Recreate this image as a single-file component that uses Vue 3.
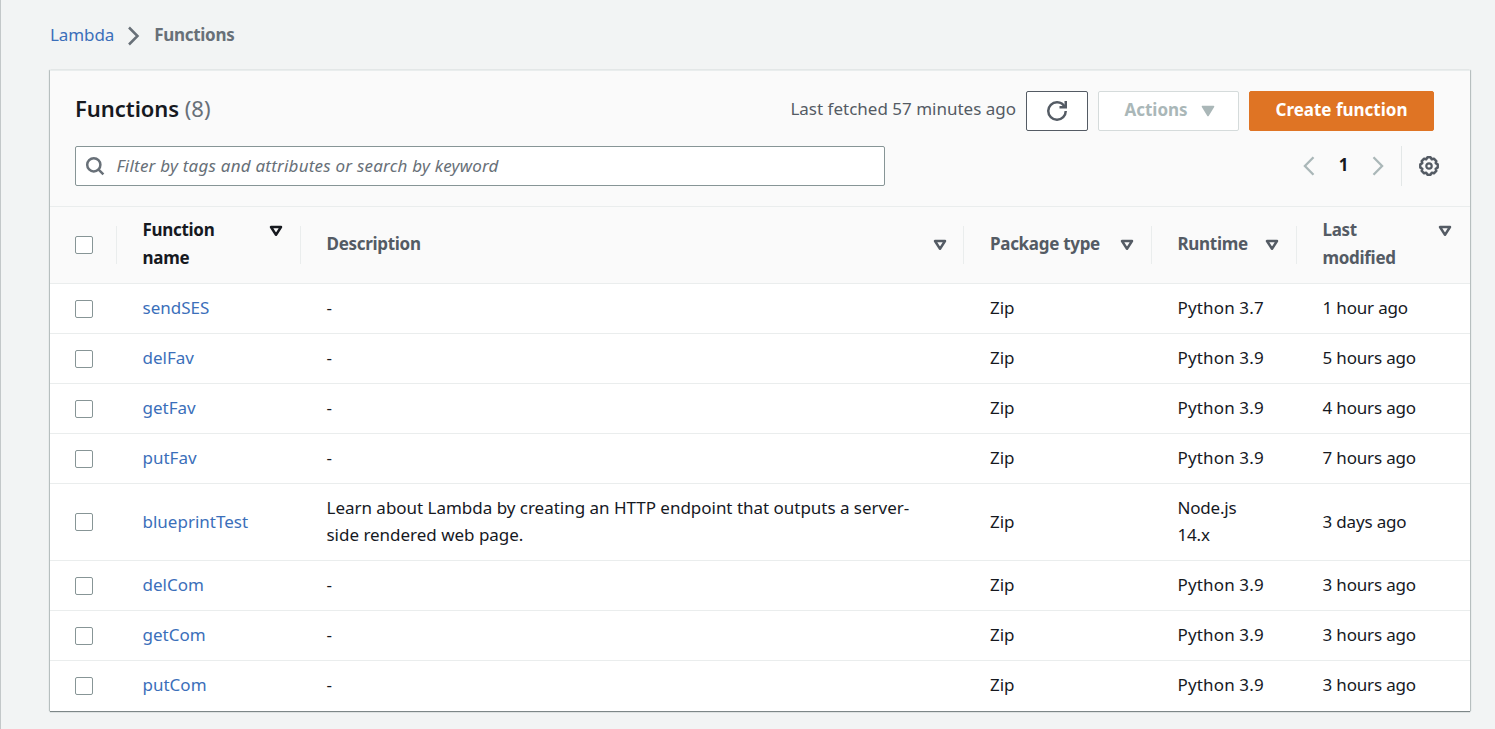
<script setup>
const rows = [
  { name: 'sendSES', desc: '-', runtime: 'Python 3.7', modified: '1 hour ago' },
  { name: 'delFav', desc: '-', runtime: 'Python 3.9', modified: '5 hours ago' },
  { name: 'getFav', desc: '-', runtime: 'Python 3.9', modified: '4 hours ago' },
  { name: 'putFav', desc: '-', runtime: 'Python 3.9', modified: '7 hours ago' },
  {
    name: 'blueprintTest',
    desc: 'Learn about Lambda by creating an HTTP endpoint that outputs a server-side rendered web page.',
    runtime: 'Node.js 14.x',
    modified: '3 days ago',
    tall: true
  },
  { name: 'delCom', desc: '-', runtime: 'Python 3.9', modified: '3 hours ago' },
  { name: 'getCom', desc: '-', runtime: 'Python 3.9', modified: '3 hours ago' },
  { name: 'putCom', desc: '-', runtime: 'Python 3.9', modified: '3 hours ago' }
]
const columns = [
  { label: 'Function name', cls: 'sorted two' },
  { label: 'Description', cls: 'about' },
  { label: 'Package type', cls: 'pkg' },
  { label: 'Runtime', cls: 'run' },
  { label: 'Last modified', cls: 'two last' }
]
</script>

<template>
  <div class="page">
    <nav class="crumbs">
      <a class="root">Lambda</a>
      <svg width="14" height="20" viewBox="0 0 14 20"><path d="M2 1.5 10.5 10 2 18.5" fill="none" stroke="#687078" stroke-width="2.5" /></svg>
      <span class="here">Functions</span>
    </nav>

    <section class="card">
      <header class="head">
        <div class="row-top">
          <h2>Functions <span>(8)</span></h2>
          <div class="actions">
            <span class="fetched">Last fetched 57 minutes ago</span>
            <button class="btn refresh">
              <svg width="20" height="20" viewBox="0 0 16 16" fill="none" stroke="#545b64" stroke-width="2">
                <path d="M10 5h5V0" />
                <path d="M15 8a6.96 6.96 0 0 1-7 7 6.96 6.96 0 0 1-7-7 6.96 6.96 0 0 1 7-7 6.87 6.87 0 0 1 6.3 4" />
              </svg>
            </button>
            <button class="btn menu">
              <span>Actions</span>
              <svg width="14" height="12" viewBox="0 0 14 12"><path d="M1.5 1.5h11L7 10.5z" fill="#aab7b8" stroke="#aab7b8" stroke-width="1.6" stroke-linejoin="round" /></svg>
            </button>
            <button class="btn primary"><span>Create function</span></button>
          </div>
        </div>
        <div class="row-filter">
          <div class="search">
            <svg width="20" height="20" viewBox="0 0 20 20" fill="none" stroke="#687078" stroke-width="2.5"><circle cx="8.8" cy="8.8" r="6.6" /><path d="m13.4 13.4 5 5" /></svg>
            <span>Filter by tags and attributes or search by keyword</span>
          </div>
          <div class="pager">
            <svg width="12" height="20" viewBox="0 0 12 20"><path d="M10.5 1.2 1.9 10l8.6 8.8" fill="none" stroke="#aab7b8" stroke-width="2.3" /></svg>
            <b>1</b>
            <svg width="12" height="20" viewBox="0 0 12 20"><path d="M1.5 1.2 10.1 10l-8.6 8.8" fill="none" stroke="#aab7b8" stroke-width="2.3" /></svg>
            <i class="rule"></i>
            <svg width="22" height="22" viewBox="0 0 22 22" fill="none" stroke="#545b64" stroke-width="2.5" stroke-linejoin="round">
              <path d="M19.7 9.4v3.2l-2 1.2.6 2.1-2.4 2.4-2.1-.6-1.2 2H9.4l-1.2-2-2.1.6-2.4-2.4.6-2.1-2-1.2V9.4l2-1.2-.6-2.1 2.4-2.4 2.1.6 1.2-2h3.2l1.2 2 2.1-.6 2.4 2.4-.6 2.1z" />
              <circle cx="11" cy="11" r="2.7" stroke-width="2.2" />
            </svg>
          </div>
        </div>
      </header>

      <div class="grid thead">
        <div class="cell check"><i class="box"></i></div>
        <div v-for="c in columns" :key="c.label" class="cell" :class="c.cls">
          <span class="label">{{ c.label }}</span>
          <svg class="sort" width="14" height="12" viewBox="0 0 14 12"><path d="M2 2h10L7 9.8z" fill="none" stroke="currentColor" stroke-width="2.5" stroke-linejoin="round" /></svg>
        </div>
      </div>

      <div v-for="r in rows" :key="r.name" class="grid tr" :class="{ tall: r.tall }">
        <div class="cell check"><i class="box"></i></div>
        <div class="cell"><a>{{ r.name }}</a></div>
        <div class="cell desc">{{ r.desc }}</div>
        <div class="cell pkg">Zip</div>
        <div class="cell runtime">{{ r.runtime }}</div>
        <div class="cell modified">{{ r.modified }}</div>
      </div>
    </section>
  </div>
</template>

<style>
body { margin: 0; background: #f2f3f3; }
</style>

<style scoped>
* { box-sizing: border-box; }
.page {
  height: 729px;
  padding: 20px 24px 0 49px;
  border-left: 1px solid #c3c8c9;
  background: #f2f4f4;
  overflow: hidden;
  font: 17px/27px "Noto Sans", "Open Sans", sans-serif;
  color: #16191f;
}
svg { display: block; flex: none; }
a { color: #3b6fba; }
.crumbs { display: flex; align-items: center; height: 30px; }
.root { letter-spacing: -0.1px; margin-top: -2px; }
.crumbs svg { margin: 2px 13px 0 13px; }
.here { font-weight: 700; color: #687078; letter-spacing: -0.3px; margin-top: -2px; }
.card {
  margin-top: 20px;
  width: 1420px;
  background: #fff;
  border-top: 1px solid #e9eded;
  box-shadow: 0 1px 1px #7d8788, 1px 0 1px #c3caca, -1px 0 1px #c3caca;
}
.head { height: 136px; padding: 20px 36px 0 25px; background: #fafafa; border-bottom: 1px solid #eaeded; }
.row-top { display: flex; justify-content: space-between; height: 40px; }
h2 { margin: 0; font-size: 22px; line-height: 35px; font-weight: 600; letter-spacing: -0.05px; }
h2 span { font-weight: 400; color: #687078; }
.actions { display: flex; align-items: center; gap: 10px; }
.fetched { color: #545b64; margin-top: -6px; white-space: nowrap; }
.btn {
  display: flex; align-items: center; justify-content: center; height: 40px; padding: 0;
  border-radius: 2px; border: 1px solid #545b64; background: #fff; font: inherit; font-weight: 700; white-space: nowrap;
}
.btn span { margin-top: -4px; }
.refresh { width: 62px; }
.menu { width: 141px; border-color: #d5dbdb; color: #aab7b8; gap: 13px; padding-left: 2px; }
.primary { width: 185px; background: #df7424; border-color: #df7424; color: #fff; }
.row-filter { display: flex; justify-content: space-between; margin-top: 15px; height: 40px; }
.search {
  display: flex; align-items: center; gap: 11px; width: 810px; padding-left: 10px;
  border: 1px solid #879596; border-radius: 2px; background: #fff; font-style: italic; color: #687078;
}
.search span { letter-spacing: 0.22px; margin: -2px 0 0 0.5px; }
.search svg { margin-left: -1px; }
.pager { display: flex; align-items: center; margin-right: -6px; }
.pager b { width: 57px; text-align: center; margin-top: -3px; }
.rule { width: 1px; height: 40px; background: #e3e7e7; margin: 0 16px 0 17px; }
.grid { display: grid; grid-template-columns: 67px 184px 663px 188px 145px 173px; }
.thead { height: 77px; background: #fafafa; border-bottom: 1px solid #eaeded; align-items: center; font-weight: 700; color: #545b64; letter-spacing: -0.3px; }
.cell { padding-left: 25.5px; }
.cell.pkg { padding-left: 26px; }
.check { padding-left: 25px; }
.box { display: block; width: 18px; height: 18px; border: 1.5px solid #879596; border-radius: 2px; background: #fff; }
.thead .cell { display: flex; height: 38px; align-items: center; justify-content: space-between; padding-right: 17px; border-right: 1px solid #eaeded; }
.thead .cell.about { padding-right: 16px; }
.thead .cell:last-child { border-right: 0; padding-right: 18px; }
.thead .box { margin-top: -1px; }
.thead .label { margin-top: -3px; }
.thead .two .label { width: 80px; line-height: 28px; }
.thead .two .sort { margin-top: -29px; }
.sorted { color: #16191f; }
.sort { margin-top: -1px; }
.tr { height: 50px; align-items: center; border-bottom: 1px solid #eaeded; }
.tr .cell:not(.check) { margin-top: -3px; }
.tr.tall .cell:not(.check) { margin-top: -1px; }
.tr.tall .desc.cell:not(.check), .tr.tall .runtime.cell:not(.check) { margin-top: -3px; }
.tr:last-child { border-bottom-color: #fff; }
.tr.tall { height: 77px; }
.desc { padding-right: 40px; letter-spacing: -0.02px; }
.runtime { letter-spacing: 0.15px; }
.modified { letter-spacing: -0.17px; }
.tall .runtime { padding-right: 50px; letter-spacing: -0.2px; }
</style>
